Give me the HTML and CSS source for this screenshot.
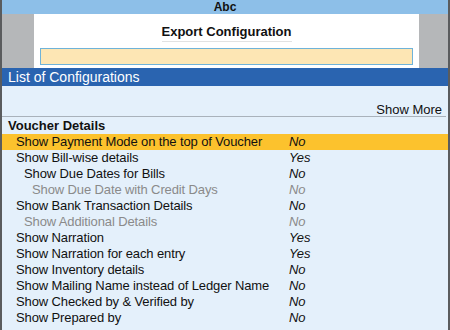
FILE: index.html
```html
<!DOCTYPE html>
<html lang="en">
<head>
  <meta charset="UTF-8">
  <title>Export Configuration</title>
  <link rel="stylesheet" href="styles.css">
</head>
<body>
  <div class="window">
    <div class="titlebar">Abc</div>
    <div class="backdrop">
      <div class="panel">
        <div class="heading"><span>Export Configuration</span></div>
        <div class="field"></div>
      </div>
    </div>
    <div class="listbar">List of Configurations</div>
    <div class="list">
      <div class="more">Show More</div>
      <div class="group">Voucher Details</div>
      <div class="row active"><span class="name">Show Payment Mode on the top of Voucher</span><span class="val">No</span></div>
      <div class="row"><span class="name">Show Bill-wise details</span><span class="val">Yes</span></div>
      <div class="row sub"><span class="name">Show Due Dates for Bills</span><span class="val">No</span></div>
      <div class="row sub2 off"><span class="name">Show Due Date with Credit Days</span><span class="val">No</span></div>
      <div class="row"><span class="name">Show Bank Transaction Details</span><span class="val">No</span></div>
      <div class="row sub off"><span class="name">Show Additional Details</span><span class="val">No</span></div>
      <div class="row"><span class="name">Show Narration</span><span class="val">Yes</span></div>
      <div class="row"><span class="name">Show Narration for each entry</span><span class="val">Yes</span></div>
      <div class="row"><span class="name">Show Inventory details</span><span class="val">No</span></div>
      <div class="row"><span class="name">Show Mailing Name instead of Ledger Name</span><span class="val">No</span></div>
      <div class="row"><span class="name">Show Checked by &amp; Verified by</span><span class="val">No</span></div>
      <div class="row"><span class="name">Show Prepared by</span><span class="val">No</span></div>
    </div>
  </div>
</body>
</html>
```
FILE: styles.css
```css
html {
  font-family: "Liberation Sans", Arial, sans-serif;
}

body {
  margin: 0;
  width: 450px;
  height: 330px;
  overflow: hidden;
}

.window {
  height: 330px;
  border-left: 2px solid #5a5c5e;
  border-right: 2px solid #5a5c5e;
  background-color: #e4f0fb;
}

.titlebar {
  height: 14px;
  line-height: 14px;
  background-color: #8dbfe8;
  text-align: center;
  font-weight: bold;
  font-size: 12px;
  color: #111;
}

.backdrop {
  background-color: #b5b7b9;
  height: 54px;
  padding: 0 29px 0 32px;
}

.panel {
  background-color: #fff;
  height: 54px;
  padding: 0 6px;
  box-sizing: border-box;
}

.heading {
  text-align: center;
  height: 34px;
  padding-top: 8px;
  box-sizing: border-box;
}

.heading span {
  font-weight: bold;
  font-size: 13px;
  color: #111;
  padding-bottom: 2px;
  border-bottom: 1px solid #e2e2e2;
}

.field {
  height: 15px;
  background-color: #fde6b4;
  border: 1px solid #6fb3d9;
}

.listbar {
  height: 18px;
  line-height: 18px;
  background-color: #2a64b0;
  color: #fff;
  font-size: 14px;
  padding-left: 6px;
}

.list {
  font-size: 13px;
  color: #111;
}

.more {
  text-align: right;
  height: 31px;
  line-height: 16px;
  padding: 16px 4px 0 0;
  box-sizing: border-box;
  border-bottom: 1px solid #a9b2bb;
  margin-right: 2px;
}

.group {
  font-weight: bold;
  height: 17px;
  line-height: 17px;
  padding-left: 6px;
}

.row {
  display: flex;
  height: 16px;
  line-height: 16px;
  letter-spacing: -0.12px;
}

.row .name {
  width: 287px;
  padding-left: 14px;
  box-sizing: border-box;
}

.row.sub .name {
  padding-left: 22px;
}

.row.sub2 .name {
  padding-left: 30px;
}

.row .val {
  font-style: italic;
}

.row.active {
  background-color: #fcc22d;
}

.row.off {
  color: #8a8a8a;
}
```
